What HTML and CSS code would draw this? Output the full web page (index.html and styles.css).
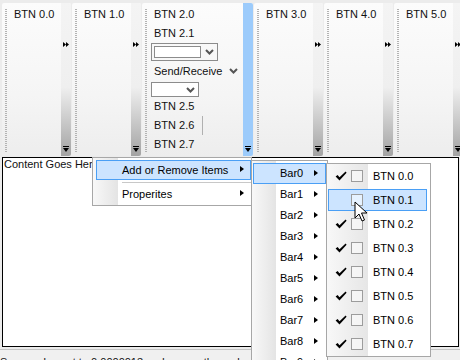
FILE: index.html
```html
<!DOCTYPE html>
<html lang="en">
<head>
    <meta charset="UTF-8">
    <title>Toolbars</title>
    <link rel="stylesheet" href="styles.css">
</head>
<body>
    <div class="app">
        <div class="toolbars">
            <div class="toolbar">
                <span class="grip"></span>
                <div class="items"><div class="btn">BTN 0.0</div></div>
                <div class="more">
                    <svg width="6" height="5" viewBox="0 0 6 5"><path d="M0 0L3 2.5L0 5ZM3 0L6 2.5L3 5Z" fill="#000"/></svg>
                    <svg class="drop" width="6" height="6" viewBox="0 0 6 6"><path d="M0 0H6V1H0ZM0 2H6L3 6Z" fill="#000"/></svg>
                </div>
            </div>
            <div class="toolbar">
                <span class="grip"></span>
                <div class="items"><div class="btn">BTN 1.0</div></div>
                <div class="more">
                    <svg width="6" height="5" viewBox="0 0 6 5"><path d="M0 0L3 2.5L0 5ZM3 0L6 2.5L3 5Z" fill="#000"/></svg>
                    <svg class="drop" width="6" height="6" viewBox="0 0 6 6"><path d="M0 0H6V1H0ZM0 2H6L3 6Z" fill="#000"/></svg>
                </div>
            </div>
            <div class="toolbar wide">
                <span class="grip"></span>
                <div class="items">
                    <div class="btn">BTN 2.0</div>
                    <div class="btn">BTN 2.1</div>
                    <div class="combo">
                        <span class="field"></span>
                        <svg class="chev" width="9" height="6" viewBox="0 0 9 6"><path d="M1 1L4.5 4.5L8 1" fill="none" stroke="#555" stroke-width="2"/></svg>
                    </div>
                    <div class="btn split">Send/Receive
                        <svg class="chev" width="9" height="6" viewBox="0 0 9 6"><path d="M1 1L4.5 4.5L8 1" fill="none" stroke="#555" stroke-width="2"/></svg>
                    </div>
                    <div class="combo small">
                        <svg class="chev" width="9" height="6" viewBox="0 0 9 6"><path d="M1 1L4.5 4.5L8 1" fill="none" stroke="#555" stroke-width="2"/></svg>
                    </div>
                    <div class="btn">BTN 2.5</div>
                    <div class="btn"><span class="sep-after">BTN 2.6</span></div>
                    <div class="btn">BTN 2.7</div>
                </div>
                <div class="more active">
                    <svg class="drop" width="6" height="6" viewBox="0 0 6 6"><path d="M0 0H6V1H0ZM0 2H6L3 6Z" fill="#000"/></svg>
                </div>
            </div>
            <div class="toolbar">
                <span class="grip"></span>
                <div class="items"><div class="btn">BTN 3.0</div></div>
                <div class="more">
                    <svg width="6" height="5" viewBox="0 0 6 5"><path d="M0 0L3 2.5L0 5ZM3 0L6 2.5L3 5Z" fill="#000"/></svg>
                    <svg class="drop" width="6" height="6" viewBox="0 0 6 6"><path d="M0 0H6V1H0ZM0 2H6L3 6Z" fill="#000"/></svg>
                </div>
            </div>
            <div class="toolbar">
                <span class="grip"></span>
                <div class="items"><div class="btn">BTN 4.0</div></div>
                <div class="more">
                    <svg width="6" height="5" viewBox="0 0 6 5"><path d="M0 0L3 2.5L0 5ZM3 0L6 2.5L3 5Z" fill="#000"/></svg>
                    <svg class="drop" width="6" height="6" viewBox="0 0 6 6"><path d="M0 0H6V1H0ZM0 2H6L3 6Z" fill="#000"/></svg>
                </div>
            </div>
            <div class="toolbar">
                <span class="grip"></span>
                <div class="items"><div class="btn">BTN 5.0</div></div>
                <div class="more">
                    <svg width="6" height="5" viewBox="0 0 6 5"><path d="M0 0L3 2.5L0 5ZM3 0L6 2.5L3 5Z" fill="#000"/></svg>
                    <svg class="drop" width="6" height="6" viewBox="0 0 6 6"><path d="M0 0H6V1H0ZM0 2H6L3 6Z" fill="#000"/></svg>
                </div>
            </div>
        </div>

        <div class="content">Content Goes Here</div>

        <div class="status">Some value set to 0.0000013 and some other value is here</div>

        <!-- context menu -->
        <div class="menu m1">
            <div class="item hot">Add or Remove Items <span class="arrow"></span></div>
            <div class="sep"></div>
            <div class="item">Properites <span class="arrow"></span></div>
        </div>

        <div class="menu m2">
            <div class="item hot">Bar0 <span class="arrow"></span></div>
            <div class="item">Bar1 <span class="arrow"></span></div>
            <div class="item">Bar2 <span class="arrow"></span></div>
            <div class="item">Bar3 <span class="arrow"></span></div>
            <div class="item">Bar4 <span class="arrow"></span></div>
            <div class="item">Bar5 <span class="arrow"></span></div>
            <div class="item">Bar6 <span class="arrow"></span></div>
            <div class="item">Bar7 <span class="arrow"></span></div>
            <div class="item">Bar8 <span class="arrow"></span></div>
            <div class="item">Bar9 <span class="arrow"></span></div>
        </div>

        <div class="menu m3">
            <div class="row"><svg class="check" width="12" height="10" viewBox="0 0 12 10"><path d="M0.6 5.6L2.6 4L4.5 6.2L10.6 0.6L11.6 1.8L4.5 9.4Z" fill="#000"/></svg><span class="box"></span><span class="label">BTN 0.0</span></div>
            <div class="row hot"><svg class="check off" width="12" height="10" viewBox="0 0 12 10"><path d="M0.6 5.6L2.6 4L4.5 6.2L10.6 0.6L11.6 1.8L4.5 9.4Z" fill="#000"/></svg><span class="box"></span><span class="label">BTN 0.1</span></div>
            <div class="row"><svg class="check" width="12" height="10" viewBox="0 0 12 10"><path d="M0.6 5.6L2.6 4L4.5 6.2L10.6 0.6L11.6 1.8L4.5 9.4Z" fill="#000"/></svg><span class="box"></span><span class="label">BTN 0.2</span></div>
            <div class="row"><svg class="check" width="12" height="10" viewBox="0 0 12 10"><path d="M0.6 5.6L2.6 4L4.5 6.2L10.6 0.6L11.6 1.8L4.5 9.4Z" fill="#000"/></svg><span class="box"></span><span class="label">BTN 0.3</span></div>
            <div class="row"><svg class="check" width="12" height="10" viewBox="0 0 12 10"><path d="M0.6 5.6L2.6 4L4.5 6.2L10.6 0.6L11.6 1.8L4.5 9.4Z" fill="#000"/></svg><span class="box"></span><span class="label">BTN 0.4</span></div>
            <div class="row"><svg class="check" width="12" height="10" viewBox="0 0 12 10"><path d="M0.6 5.6L2.6 4L4.5 6.2L10.6 0.6L11.6 1.8L4.5 9.4Z" fill="#000"/></svg><span class="box"></span><span class="label">BTN 0.5</span></div>
            <div class="row"><svg class="check" width="12" height="10" viewBox="0 0 12 10"><path d="M0.6 5.6L2.6 4L4.5 6.2L10.6 0.6L11.6 1.8L4.5 9.4Z" fill="#000"/></svg><span class="box"></span><span class="label">BTN 0.6</span></div>
            <div class="row"><svg class="check" width="12" height="10" viewBox="0 0 12 10"><path d="M0.6 5.6L2.6 4L4.5 6.2L10.6 0.6L11.6 1.8L4.5 9.4Z" fill="#000"/></svg><span class="box"></span><span class="label">BTN 0.7</span></div>
        </div>

        <svg class="cursor" width="14" height="22" viewBox="0 0 14 22"><path d="M1 1V17L5 13L8 20L10.5 19L7.5 12H13Z" fill="#fff" stroke="#000" stroke-width="1" stroke-linejoin="round"/></svg>
    </div>
</body>
</html>
```
FILE: styles.css
```css
body {
    margin: 0;
    font-family: "Liberation Sans", Arial, sans-serif;
    font-size: 11px;
    color: #111;
    background: #ececec;
}

.app {
    position: relative;
    width: 460px;
    height: 360px;
    overflow: hidden;
    background: #ececec;
}

/* toolbar strip */
.toolbars {
    display: flex;
    gap: 1px;
    padding: 3px 0 0 2px;
    height: 154px;
}

.toolbar {
    display: flex;
    flex-shrink: 0;
    width: 69px;
    height: 153px;
    background: linear-gradient(to bottom, #fcfcfc, #f5f5f5 60%, #ededed);
    border-radius: 2px;
}

.toolbar.wide {
    width: 111px;
}

.grip {
    width: 2px;
    margin: 6px 0 4px 3px;
    background: repeating-linear-gradient(to bottom, #b3b3b3 0 1px, transparent 1px 2px);
}

.items {
    flex: 1;
    padding: 2px 0 0 7px;
}

.btn {
    line-height: 19px;
    white-space: nowrap;
}

.more {
    width: 10px;
    display: flex;
    flex-direction: column;
    align-items: center;
    padding: 39px 0 4px;
    box-sizing: border-box;
    background: linear-gradient(to bottom, #f4f4f4, #efefef 55%, #a3a3a3);
    border-radius: 0 2px 2px 0;
}

.more.active {
    background: #9ccbfb;
}

.more .drop {
    margin-top: auto;
}

/* combo boxes in toolbar 2 */
.combo {
    display: flex;
    align-items: center;
    width: 67px;
    height: 18px;
    margin-left: -3px;
    padding: 2px;
    box-sizing: border-box;
    border: 1px solid #8c8c8c;
}

.field {
    width: 47px;
    height: 12px;
    box-sizing: border-box;
    border: 1px solid #8c8c8c;
    background: #fff;
}

.combo .chev {
    margin-left: 4px;
}

.combo.small {
    width: 48px;
    height: 15px;
    margin-top: 1px;
    justify-content: flex-end;
    padding: 0 3px 0 0;
    background: #fff;
}

.split {
    margin-top: 1px;
}

.split .chev {
    margin-left: 3px;
    vertical-align: 1px;
}

.sep-after {
    display: inline-block;
    padding-right: 8px;
    border-right: 1px solid #b0b0b0;
}

/* main content */
.content {
    height: 188px;
    margin: 0 1px 0 2px;
    padding-left: 1px;
    border: 1px solid #000;
    background: #fff;
    line-height: 13px;
}

.status {
    margin-top: 2px;
    border-top: 1px solid #c4c4c4;
    background: #f0f0f0;
    padding: 6px 0 0 0;
    white-space: nowrap;
    line-height: 13px;
}

/* menus */
.menu {
    position: absolute;
    border: 1px solid #a7a7a7;
    box-sizing: border-box;
    color: #000;
}

.item {
    position: relative;
    height: 20px;
    line-height: 18px;
    border: 1px solid transparent;
    box-sizing: border-box;
    white-space: nowrap;
}

.item.hot,
.row.hot {
    background: #cce4ff;
    border-color: #4a9ff5;
}

.arrow {
    position: absolute;
    right: 6px;
    top: 5px;
    width: 0;
    height: 0;
    border-left: 4px solid #000;
    border-top: 3.5px solid transparent;
    border-bottom: 3.5px solid transparent;
}

.m1 {
    left: 92px;
    top: 157px;
    width: 160px;
    height: 49px;
    padding: 2px 0 0;
    background: linear-gradient(to right, #f8f8f8, #e4e4e4 25px, #fff 25px);
}

.m1 .item {
    margin-left: 3px;
    padding-left: 25px;
}

.sep {
    height: 1px;
    margin: 2px 0 1px 29px;
    background: #c8c8c8;
}

.m2 {
    left: 251px;
    top: 160px;
    width: 77px;
    height: 230px;
    padding-top: 2px;
    background: linear-gradient(to right, #f8f8f8, #e4e4e4 24px, #fff 24px);
}

.m2 .item {
    height: 21px;
    line-height: 19px;
    margin: 0 1px;
    padding-left: 26px;
}

.m2 .arrow {
    right: 7px;
    top: 6px;
}

.m3 {
    left: 326px;
    top: 163px;
    width: 105px;
    height: 194px;
    display: flex;
    flex-direction: column;
    background: linear-gradient(to right, #f8f8f8, #e6e6e6 41px, #fff 41px);
}

.row {
    display: flex;
    align-items: center;
    flex-shrink: 0;
    height: 22px;
    margin: 1px 3px 1px 1px;
    border: 1px solid transparent;
    box-sizing: border-box;
}

.check {
    margin-left: 6px;
}

.check.off {
    visibility: hidden;
}

.box {
    width: 12px;
    height: 12px;
    margin-left: 4px;
    box-sizing: border-box;
    border: 1px solid #9c9c9c;
    background: rgba(255, 255, 255, 0.5);
}

.label {
    margin-left: 10px;
}

.cursor {
    position: absolute;
    left: 354px;
    top: 201px;
}
```
